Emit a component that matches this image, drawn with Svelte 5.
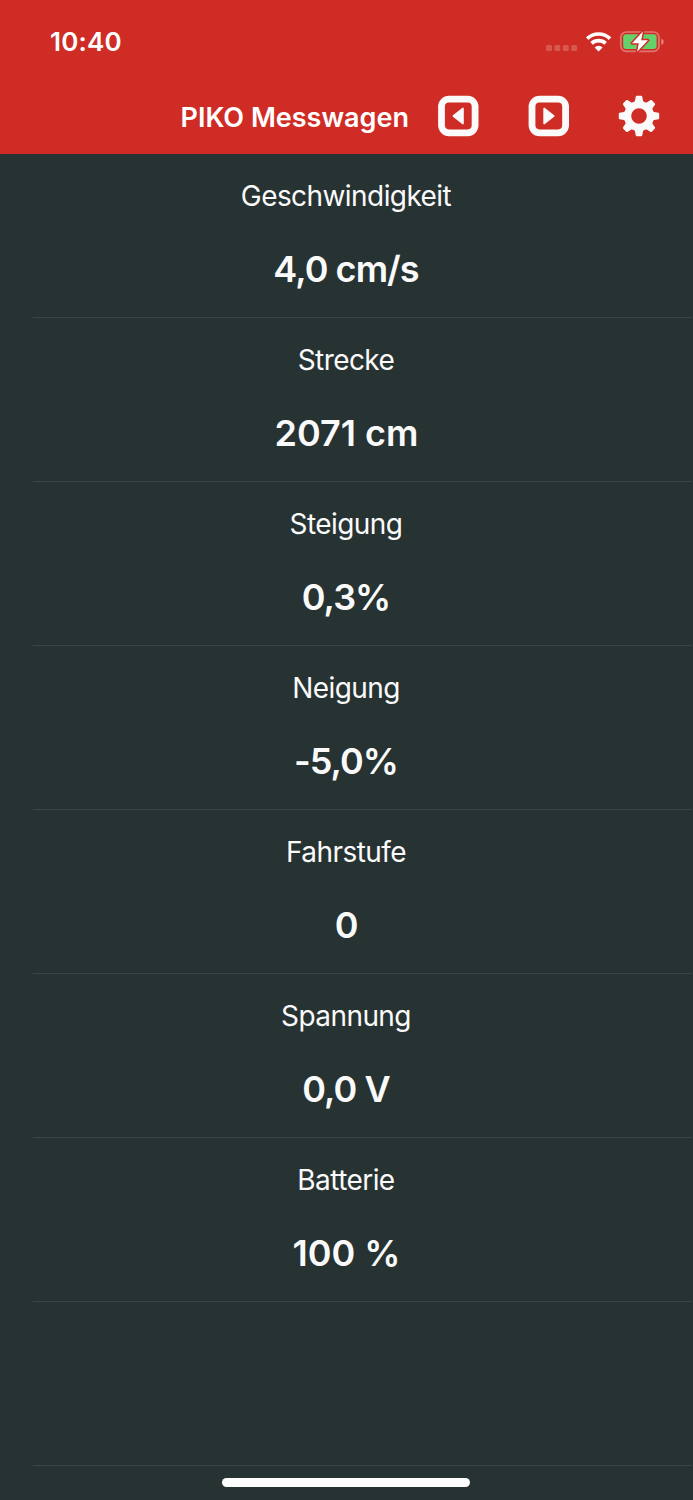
<script lang="ts">
  type Reading = { label: string; value: string };

  let readings: Reading[] = $state([
    { label: 'Geschwindigkeit', value: '4,0 cm/s' },
    { label: 'Strecke', value: '2071 cm' },
    { label: 'Steigung', value: '0,3%' },
    { label: 'Neigung', value: '-5,0%' },
    { label: 'Fahrstufe', value: '0' },
    { label: 'Spannung', value: '0,0 V' },
    { label: 'Batterie', value: '100 %' }
  ]);

  const teeth = [0, 45, 90, 135, 180, 225, 270, 315];
</script>

<div class="screen">
  <header>
    <div class="status-bar">
      <span class="time">10:40</span>
      <svg class="signal" width="32" height="8" viewBox="0 0 32 8">
        {#each [0, 8.4, 16.8, 25.2] as x}
          <rect {x} y="1" width="6" height="6" rx="1.5" />
        {/each}
      </svg>
      <svg class="wifi" width="28" height="22" viewBox="0 0 28 22">
        <path d="M2.2 7.6A16.4 16.4 0 0 1 25 7.6" />
        <path d="M6.6 12.4A10.1 10.1 0 0 1 20.6 12.4" />
        <path class="wifi-dot" d="M13.6 20.4L9.6 16.4A5.8 5.8 0 0 1 17.6 16.4Z" />
      </svg>
      <svg class="battery" width="46" height="24" viewBox="0 0 46 24">
        <rect class="shell" x="1.8" y="2" width="38.2" height="19.4" rx="5.6" />
        <rect class="charge" x="4.2" y="4.3" width="33.4" height="14.8" rx="3" />
        <path class="nub" d="M42.4 8.4Q44.7 9.5 44.7 11.7T42.4 15Z" />
        <path class="bolt" d="M23.9 1.6L13 13.2H19.8L18.2 21.8L29 10.3H22.2Z" />
      </svg>
    </div>

    <nav>
      <h1>PIKO Messwagen</h1>
      <button aria-label="Zurück">
        <svg width="42" height="42" viewBox="0 0 42 42">
          <rect class="frame" x="4.5" y="4.2" width="33.6" height="33.6" rx="7.5" />
          <path class="arrow" d="M16.4 21L26 13.4V28.6Z" />
        </svg>
      </button>
      <button aria-label="Vorwärts">
        <svg width="42" height="42" viewBox="0 0 42 42">
          <rect class="frame" x="4" y="4.2" width="33.6" height="33.6" rx="7.5" />
          <path class="arrow" d="M25.7 21L16.1 13.4V28.6Z" />
        </svg>
      </button>
      <button aria-label="Einstellungen">
        <svg width="42" height="42" viewBox="-21 -21 42 42">
          <circle class="ring" r="11.3" />
          {#each teeth as angle}
            <path d="M-2.4 -20.2H2.4L3.2 -19.6L4.1 -15L6 -13H-6L-4.1 -15L-3.2 -19.6Z" transform="rotate({angle})" />
          {/each}
        </svg>
      </button>
    </nav>
  </header>

  <main>
    {#each readings as reading}
      <section class="row">
        <div class="label">{reading.label}</div>
        <div class="value" class:decimal={reading.value.includes(',')}>{reading.value}</div>
      </section>
    {/each}
    <section class="row"></section>
  </main>

  <footer>
    <div class="home-indicator"></div>
  </footer>
</div>

<style>
  :global(body) {
    background: #273233;
  }

  .screen {
    display: flex;
    flex-direction: column;
    width: 693px;
    height: 1500px;
    overflow: hidden;
    background: #273233;
    color: #fafafa;
    font-family: Inter, 'Liberation Sans', sans-serif;
  }

  header {
    display: flex;
    flex-direction: column;
    height: 154px;
    background: #d02c26;
    color: #fff;
  }

  .status-bar {
    display: flex;
    align-items: center;
    height: 80px;
    padding: 4px 28px 0 50px;
    box-sizing: border-box;
  }

  .time {
    margin-right: auto;
    font-size: 26px;
    font-weight: 600;
    line-height: 32px;
    letter-spacing: 0.2px;
  }

  .signal {
    margin: 12px 7px 0 0;
    fill: rgba(255, 255, 255, 0.2);
  }

  .wifi {
    margin-right: 6px;
    fill: none;
    stroke: #fff;
    stroke-width: 3.7;
  }

  .wifi .wifi-dot {
    fill: #fff;
    stroke: none;
  }

  .shell {
    fill: none;
    stroke: rgba(255, 255, 255, 0.35);
    stroke-width: 1.7;
  }

  .charge {
    fill: #65d16a;
  }

  .nub {
    fill: rgba(255, 255, 255, 0.45);
  }

  .bolt {
    fill: #fff;
    stroke: #d02c26;
    stroke-width: 3;
    stroke-linejoin: round;
    paint-order: stroke;
  }

  nav {
    display: flex;
    align-items: center;
    height: 74px;
    padding: 0 33px 1px 180.5px;
  }

  h1 {
    margin: 3px auto 0 0;
    font-size: 27px;
    font-weight: 600;
    line-height: 34px;
    white-space: nowrap;
  }

  button {
    display: flex;
    margin-left: 48.5px;
    padding: 0;
    border: 0;
    background: none;
    color: #fafafa;
    fill: currentColor;
  }

  h1 + button {
    margin-left: 0;
  }

  .frame {
    fill: none;
    stroke: currentColor;
    stroke-width: 6.8;
  }

  .arrow {
    stroke: currentColor;
    stroke-width: 1.6;
    stroke-linejoin: round;
  }

  .ring {
    fill: none;
    stroke: currentColor;
    stroke-width: 7;
  }

  .row {
    display: flex;
    flex-direction: column;
    align-items: center;
    gap: 34px;
    height: 164px;
    margin: 0 1px 0 33px;
    padding: 25px 32px 0 0;
    box-sizing: border-box;
    border-bottom: 1px solid #3b4445;
    white-space: nowrap;
  }

  .label {
    padding-right: 1px;
    font-size: 28px;
    line-height: 34px;
    letter-spacing: -0.57px;
  }

  .value {
    font-size: 36px;
    font-weight: 600;
    line-height: 44px;
  }

  .decimal {
    padding-right: 1px;
    letter-spacing: -0.95px;
  }

  footer {
    display: flex;
    justify-content: center;
    padding: 12px 1px 0 0;
  }

  .home-indicator {
    width: 248px;
    height: 9px;
    border-radius: 5px;
    background: #fff;
  }
</style>
